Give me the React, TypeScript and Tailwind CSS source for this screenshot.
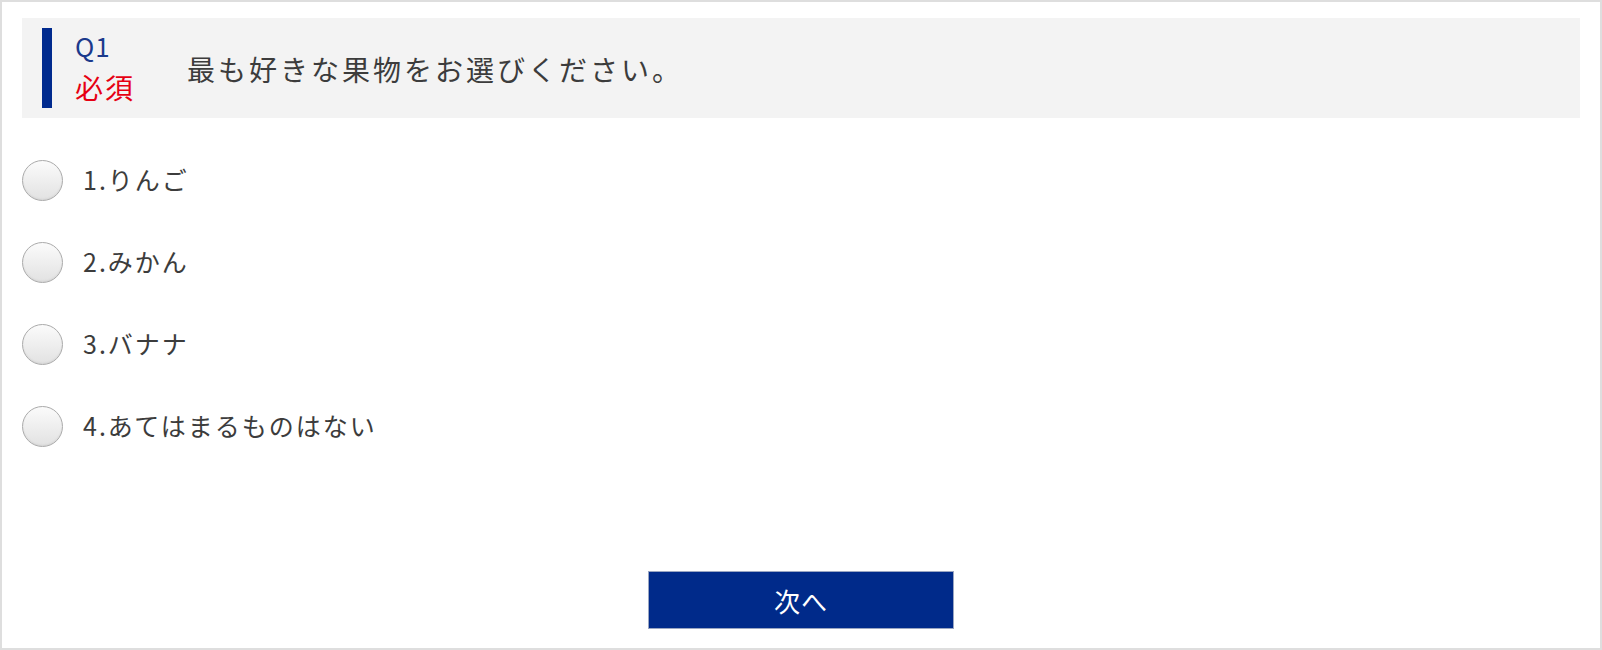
import { useState } from 'react'

const options = ['1.りんご', '2.みかん', '3.バナナ', '4.あてはまるものはない']

const font = { fontFamily: '"Noto Sans CJK JP", "Noto Sans", sans-serif' }

export default function App() {
  const [selected, setSelected] = useState<number | null>(null)

  return (
    <div
      style={font}
      className="w-[1602px] h-[650px] border-2 border-[#dedede] bg-white px-[20px] pt-[16px] flex flex-col"
    >
      {/* question header */}
      <div className="h-[100px] bg-[#f3f3f3] flex items-center pl-[20px]">
        <div className="w-[10px] h-[80px] bg-[#002a8e]" />
        <div className="w-[135px] h-[80px] pl-[23px] pt-[4px] flex flex-col">
          <span className="text-[26px] leading-[27px] text-[#1b3a8c] tracking-[1px]">Q1</span>
          <span className="mt-[12px] text-[28px] leading-[32px] text-[#e60012] tracking-[2px]">必須</span>
        </div>
        <div className="text-[28px] tracking-[3px] text-[#3c3c3c] pt-[2px]">
          最も好きな果物をお選びください。
        </div>
      </div>

      {/* choices */}
      <div className="mt-[21px] flex flex-col">
        {options.map((o, i) => (
          <label
            key={o}
            onClick={() => setSelected(i)}
            className="h-[82px] flex items-center cursor-pointer"
          >
            <span className="w-[41px] h-[41px] rounded-full border-[1.5px] border-[#ababab] bg-linear-to-b from-[#fbfbfb] to-[#e2e2e2] flex items-center justify-center shadow-[inset_0_-1px_2px_rgba(0,0,0,0.06)]">
              {selected === i && <span className="w-[16px] h-[16px] rounded-full bg-[#002a8e]" />}
            </span>
            <span className="ml-[20px] text-[25px] tracking-[2px] text-[#3c3c3c]">{o}</span>
          </label>
        ))}
      </div>

      {/* next */}
      <div className="mt-[104px] flex justify-center">
        <button className="w-[306px] h-[58px] bg-[#002a8a] border border-[#9aa6c2] text-white text-[26px] tracking-[1px]">
          次へ
        </button>
      </div>
    </div>
  )
}
